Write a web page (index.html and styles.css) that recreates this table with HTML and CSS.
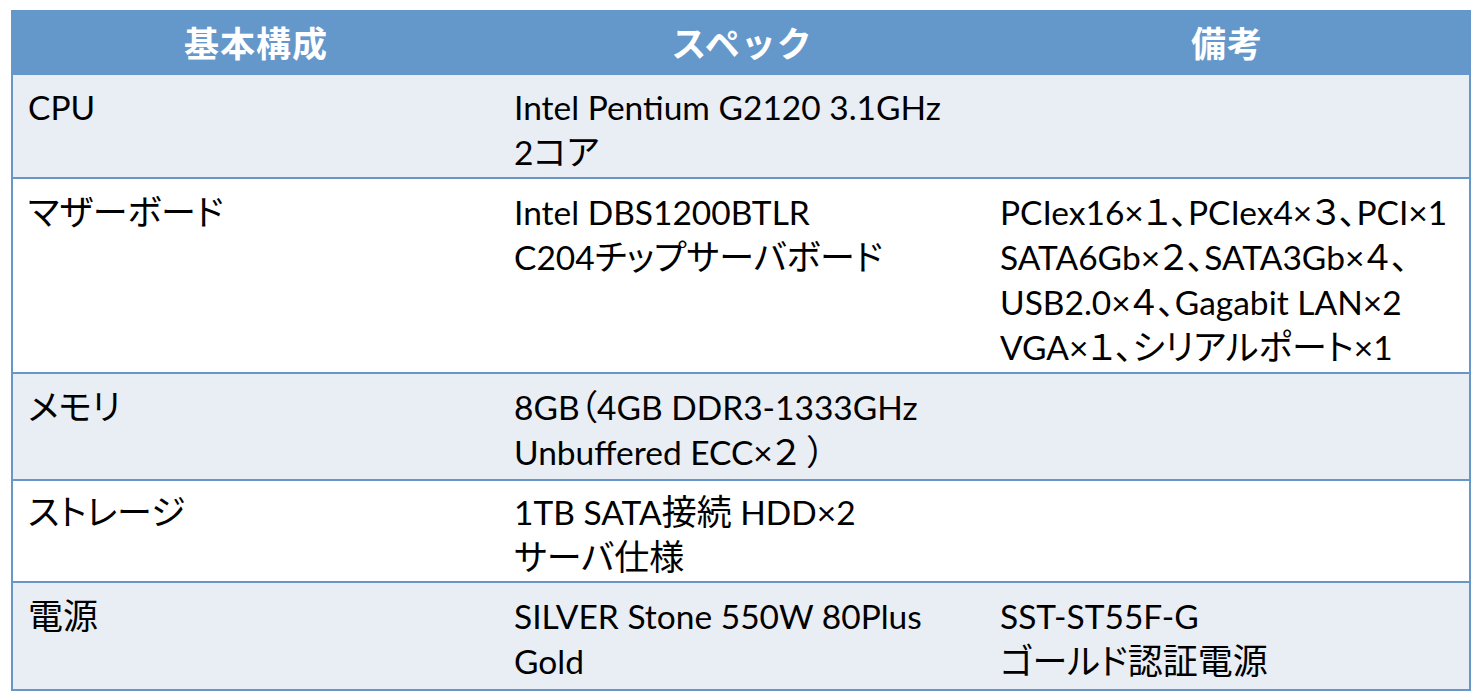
FILE: index.html
```html
<!DOCTYPE html>
<html lang="ja">
<head>
<meta charset="utf-8">
<link rel="stylesheet" href="styles.css">
</head>
<body>
<div class="spec">
  <div class="row head">
    <div class="cell">基本構成</div>
    <div class="cell">スペック</div>
    <div class="cell">備考</div>
  </div>
  <div class="row odd">
    <div class="cell">CPU</div>
    <div class="cell">Intel Pentium G2120 3.1GHz<br>2<span class="jp">コア</span></div>
    <div class="cell"></div>
  </div>
  <div class="row tall">
    <div class="cell"><span class="jp">マザーボード</span></div>
    <div class="cell">Intel DBS1200BTLR<br>C204<span class="jp">チップサーバボード</span></div>
    <div class="cell">PCIex16×<span class="jp">１、</span>PCIex4×<span class="jp">３、</span>PCI×1<br>SATA6Gb×<span class="jp">２、</span>SATA3Gb×<span class="jp">４、</span><br>USB2.0×<span class="jp">４、</span>Gagabit LAN×2<br>VGA×<span class="jp">１、シリアルポート</span>×1</div>
  </div>
  <div class="row odd mem">
    <div class="cell"><span class="jp">メモリ</span></div>
    <div class="cell">8GB<span class="jp">（</span>4GB DDR3-1333GHz<br>Unbuffered ECC×<span class="jp">２ ）</span></div>
    <div class="cell"></div>
  </div>
  <div class="row store">
    <div class="cell"><span class="jp">ストレージ</span></div>
    <div class="cell">1TB SATA<span class="jp">接続</span> HDD×2<br><span class="jp">サーバ仕様</span></div>
    <div class="cell"></div>
  </div>
  <div class="row odd last">
    <div class="cell"><span class="jp">電源</span></div>
    <div class="cell">SILVER Stone 550W 80Plus<br>Gold</div>
    <div class="cell">SST-ST55F-G<br><span class="jp">ゴールド認証電源</span></div>
  </div>
</div>
</body>
</html>
```

FILE: styles.css
```css
html, body {
  margin: 0;
  padding: 0;
  background: #ffffff;
}
body {
  padding: 10px 0 0 11px;
  font-family: Lato, "Noto Sans CJK JP", sans-serif;
  color: #000;
}
.spec {
  width: 1460px;
  box-sizing: border-box;
  border: 2px solid #6797c9;
  border-top: 1px solid #6797c9;
}
.row {
  display: grid;
  grid-template-columns: 486px 486px 1fr;
  border-top: 2px solid #6797c9;
  font-size: 33.5px;
  line-height: 45px;
}
.row:first-child {
  border-top: none;
}
.row.odd {
  background: #e9edf4;
}
.cell {
  padding: 10px 10px 2px 15px;
  white-space: nowrap;
}
.row.tall .cell {
  padding-top: 11px;
}
.row.mem .cell {
  padding-top: 11px;
  padding-bottom: 4px;
}
.row.store .cell {
  padding-top: 9px;
  padding-bottom: 1px;
}
.row.last .cell {
  padding-top: 11px;
  padding-bottom: 5px;
}
.jp {
  font-family: "Noto Sans CJK JP", sans-serif;
  font-size: 35px;
  line-height: 1;
  font-feature-settings: "palt";
}
.row.head {
  background: #6598ca;
  height: 62px;
  color: #fff;
  font-weight: bold;
  font-family: "Noto Sans CJK JP", sans-serif;
  font-size: 35px;
  line-height: 62px;
}
.row.head .cell {
  padding: 0;
  text-align: center;
  letter-spacing: 1px;
}
```
